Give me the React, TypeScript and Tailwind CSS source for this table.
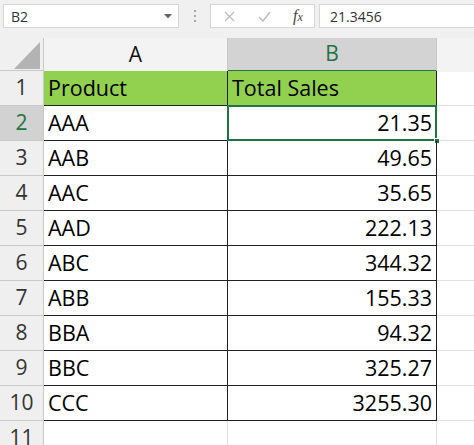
import { ReactNode } from "react"

const rows = [
  { product: "AAA", sales: "21.35" },
  { product: "AAB", sales: "49.65" },
  { product: "AAC", sales: "35.65" },
  { product: "AAD", sales: "222.13" },
  { product: "ABC", sales: "344.32" },
  { product: "ABB", sales: "155.33" },
  { product: "BBA", sales: "94.32" },
  { product: "BBC", sales: "325.27" },
  { product: "CCC", sales: "3255.30" },
]

const font = { fontFamily: '"Open Sans", "Noto Sans", sans-serif' }

function RowHead({ n, active }: { n: number; active?: boolean }) {
  return (
    <div
      className={`flex items-center justify-center border-r border-b border-[#c8c8c8] text-[21px] ${
        active ? "bg-[#d2d2d2] text-[#217346]" : "bg-[#efefef] text-[#333]"
      }`}
    >
      {n}
    </div>
  )
}

function Row({ children }: { children: ReactNode }) {
  return <div className="grid h-[35px] grid-cols-[44px_184px_209px_1fr]">{children}</div>
}

export default function App() {
  return (
    <div className="h-[445px] w-[474px] overflow-hidden bg-[#f0f0f0]" style={font}>
      {/* formula bar */}
      <div className="flex h-[38px] items-start pt-[4px]">
        <div className="ml-[3px] flex h-[24px] w-[176px] items-center justify-between border border-[#d6d6d6] bg-white pl-[7px] pr-[6px] text-[14px] text-[#333]">
          <span>B2</span>
          <svg width="8" height="5" viewBox="0 0 8 5">
            <path d="M0 0h8L4 4.5z" fill="#666" />
          </svg>
        </div>
        <div className="flex h-[24px] w-[31px] flex-col items-center justify-center gap-[3px]">
          <span className="h-[2px] w-[2px] bg-[#a8a8a8]" />
          <span className="h-[2px] w-[2px] bg-[#a8a8a8]" />
          <span className="h-[2px] w-[2px] bg-[#a8a8a8]" />
        </div>
        <div className="flex h-[24px] w-[105px] items-center border border-[#d6d6d6] bg-white pl-[12px]">
          <svg width="11" height="11" viewBox="0 0 11 11" className="ml-[1px]">
            <path d="M1 1l9 9M10 1l-9 9" stroke="#bdbdbd" strokeWidth="1.3" />
          </svg>
          <svg width="13" height="11" viewBox="0 0 13 11" className="ml-[23px]">
            <path d="M1 6l4 4 7-9" stroke="#bdbdbd" strokeWidth="1.5" fill="none" />
          </svg>
          <span
            className="ml-[22px] text-[16px] italic text-[#444]"
            style={{ fontFamily: '"Liberation Serif", serif' }}
          >
            f<span className="text-[12px]">x</span>
          </span>
        </div>
        <div className="ml-[4px] flex h-[24px] flex-1 items-center border border-r-0 border-[#d6d6d6] bg-white pl-[10px] text-[14px] text-[#333]">
          21.3456
        </div>
      </div>

      {/* column headers */}
      <div className="grid h-[33px] grid-cols-[44px_184px_209px_1fr] border-b border-[#c8c8c8]">
        <div className="flex items-end justify-end border-r border-[#c8c8c8] pb-[3px] pr-[3px]">
          <svg width="26" height="27" viewBox="0 0 26 27">
            <path d="M26 0V27H0z" fill="#b3b3b3" />
          </svg>
        </div>
        <div className="flex items-center justify-center border-r border-[#c8c8c8] bg-[#f3f3f3] text-[21px] text-[#111]">
          A
        </div>
        <div className="flex items-center justify-center border-b-2 border-r border-[#217346] border-r-[#c8c8c8] bg-[#d3d3d3] text-[21px] text-[#217346]">
          B
        </div>
        <div className="bg-[#f3f3f3]" />
      </div>

      {/* sheet */}
      <div className="bg-white text-[21.5px] text-black">
        <Row>
          <RowHead n={1} />
          <div className="flex items-center border-r border-b border-[#222] bg-[#92d050] pl-[4px]">Product</div>
          <div className="flex items-center border-r border-b border-[#222] bg-[#92d050] pl-[4px]">Total Sales</div>
          <div className="border-b border-[#e0e0e0]" />
        </Row>
        {rows.map((r, i) => (
          <Row key={r.product}>
            <RowHead n={i + 2} active={i === 0} />
            <div className="flex items-center border-r border-b border-[#222] pl-[4px]">{r.product}</div>
            <div className="relative flex items-center justify-end border-r border-b border-[#222] pr-[4px]">
              {r.sales}
              {i === 0 && (
                <>
                  <div className="absolute -top-px -left-px -right-px -bottom-px border-2 border-[#217346]" />
                  <div className="absolute -right-[4px] -bottom-[4px] h-[6px] w-[6px] border border-white bg-[#217346]" />
                </>
              )}
            </div>
            <div className="border-b border-[#e0e0e0]" />
          </Row>
        ))}
        <Row>
          <RowHead n={11} />
          <div className="border-r border-[#e0e0e0]" />
          <div className="border-r border-[#e0e0e0]" />
          <div />
        </Row>
      </div>
    </div>
  )
}
